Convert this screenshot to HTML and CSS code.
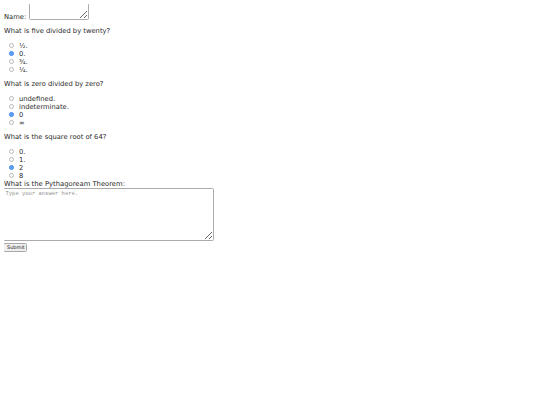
FILE: index.html
```html
<!DOCTYPE html>
<html>
<head>
<meta charset="utf-8">
<link rel="stylesheet" href="styles.css">
</head>
<body>
<form class="quiz">
  <div class="name-row">
    <label class="name-label" for="name">Name:</label>
    <textarea id="name" class="name-box"></textarea>
  </div>

  <p class="question first">What is five divided by twenty?</p>
  <div class="options">
    <label class="option"><input type="radio" name="q1"><span>½.</span></label>
    <label class="option"><input type="radio" name="q1" checked><span>0.</span></label>
    <label class="option"><input type="radio" name="q1"><span>¾.</span></label>
    <label class="option"><input type="radio" name="q1"><span>¼.</span></label>
  </div>

  <p class="question">What is zero divided by zero?</p>
  <div class="options">
    <label class="option"><input type="radio" name="q2"><span>undefined.</span></label>
    <label class="option"><input type="radio" name="q2"><span>indeterminate.</span></label>
    <label class="option"><input type="radio" name="q2" checked><span>0</span></label>
    <label class="option"><input type="radio" name="q2"><span>∞</span></label>
  </div>

  <p class="question">What is the square root of 64?</p>
  <div class="options">
    <label class="option"><input type="radio" name="q3"><span>0.</span></label>
    <label class="option"><input type="radio" name="q3"><span>1.</span></label>
    <label class="option"><input type="radio" name="q3" checked><span>2</span></label>
    <label class="option"><input type="radio" name="q3"><span>8</span></label>
  </div>

  <label class="essay-label" for="essay">What is the Pythagoream Theorem:</label>
  <textarea id="essay" class="essay-box" placeholder="Type your answer here."></textarea>
  <div class="actions">
    <button type="submit" class="submit">Submit</button>
  </div>
</form>
</body>
</html>
```

FILE: styles.css
```css
html, body {
  background: #ffffff;
}
body {
  margin: 4px;
  font-family: "DejaVu Sans", Verdana, sans-serif;
  font-size: 6.75px;
  color: #2a2a2a;
}
.quiz {
  display: flex;
  flex-direction: column;
  align-items: flex-start;
}
.name-row {
  display: flex;
  align-items: flex-end;
  gap: 3px;
  margin-top: -1px;
}
.name-label {
  line-height: 8px;
  margin-bottom: -1px;
}
.name-box {
  width: 60px;
  height: 17px;
  box-sizing: border-box;
  margin: 0;
  padding: 1px;
  border: 1px solid #ababab;
  border-radius: 1.5px;
  resize: both;
  font-family: "Liberation Mono", monospace;
  font-size: 5.5px;
}
.question {
  margin: 6.5px 0 6.5px 0;
  line-height: 8px;
}
.question.first {
  margin-top: 7px;
}
.options {
  display: flex;
  flex-direction: column;
}
.option {
  display: flex;
  align-items: center;
  height: 8px;
  line-height: 8px;
}
.option input {
  appearance: none;
  -webkit-appearance: none;
  box-sizing: border-box;
  width: 5px;
  height: 5px;
  margin: 0 5px 0 5px;
  border: 1px solid #b9b9b9;
  border-radius: 50%;
  background: #ffffff;
}
.option input:checked {
  border-color: #3f8cf0;
  background: #3f8cf0;
  box-shadow: inset 0 0 0 0.6px #8fbcf6;
}
.essay-label {
  line-height: 8px;
  font-size: 6.8px;
}
.essay-box {
  width: 211px;
  height: 53px;
  box-sizing: border-box;
  margin: 0 0 0 -1px;
  padding: 1px 1.5px;
  border: 1px solid #ababab;
  border-radius: 1.5px;
  font-family: "Liberation Mono", monospace;
  font-size: 5.5px;
  resize: both;
}
.essay-box::placeholder {
  color: #8f8f8f;
}
.actions {
  margin-top: 2px;
}
.submit {
  margin: 0 0 0 -1px;
  padding: 1px 3px;
  width: 24px;
  height: 9px;
  box-sizing: border-box;
  font-family: "DejaVu Sans", Verdana, sans-serif;
  font-size: 5px;
  line-height: 5px;
  background: #efefef;
  border: 1px solid #a8a8a8;
  border-radius: 1.5px;
  color: #222222;
}
```
